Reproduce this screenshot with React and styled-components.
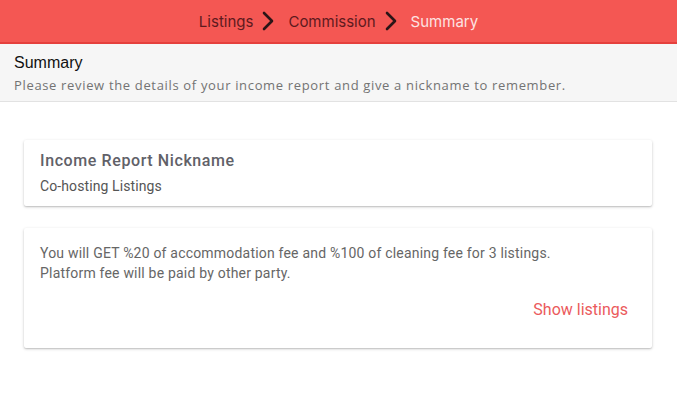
import React from 'react';
import styled, { createGlobalStyle } from 'styled-components';

const GlobalStyle = createGlobalStyle`
  html, body {
    margin: 0;
    padding: 0;
    background: #ffffff;
    font-family: Roboto, "Liberation Sans", sans-serif;
  }
`;

const Page = styled.div`
  width: 677px;
  height: 403px;
  overflow: hidden;
  background: #ffffff;
`;

const Steps = styled.nav`
  height: 42px;
  background: #f45753;
  border-bottom: 2px solid #e5403d;
  display: flex;
  align-items: center;
  justify-content: center;
  gap: 8px;
`;

const Step = styled.span`
  font-family: Inter, Roboto, sans-serif;
  font-size: 15px;
  color: ${(p) => (p.active ? '#fde3e2' : '#5e1a1e')};
`;

const Chevron = styled.svg`
  width: 14px;
  height: 22px;
  margin: 0 5px 0 0;
`;

const SubHeader = styled.header`
  background: #f6f6f6;
  border-bottom: 1px solid #e2e2e2;
  padding: 8px 14px 9px;
  height: 40px;
`;

const SubTitle = styled.h1`
  margin: 0;
  font-family: "Liberation Sans", Arial, sans-serif;
  font-weight: 400;
  font-size: 16px;
  line-height: 21px;
  color: #111;
`;

const SubText = styled.p`
  margin: 3px 0 0;
  font-family: "Open Sans", sans-serif;
  font-size: 13px;
  line-height: 18px;
  letter-spacing: 0.66px;
  color: #737373;
`;

const Content = styled.main`
  padding: 38px 24px 0 24px;
  display: flex;
  flex-direction: column;
  gap: 22px;
`;

const Card = styled.section`
  width: 628px;
  box-sizing: border-box;
  background: #fff;
  border-radius: 2px;
  box-shadow: 0 1px 3px rgba(0, 0, 0, 0.22), 0 1px 1px rgba(0, 0, 0, 0.08);
  padding: ${(p) => p.pad || '10px 16px 11px'};
`;

const CardTitle = styled.h2`
  margin: 0;
  font-size: 16px;
  font-weight: 500;
  line-height: 22px;
  letter-spacing: 0.6px;
  color: #616168;
`;

const CardValue = styled.div`
  margin-top: 5px;
  font-size: 14px;
  line-height: 18px;
  letter-spacing: 0.1px;
  color: #555;
`;

const Info = styled.p`
  margin: 0;
  font-size: 14px;
  line-height: 20px;
  letter-spacing: 0.2px;
  color: #666;
`;

const Actions = styled.div`
  display: flex;
  justify-content: flex-end;
  margin-top: 17px;
`;

const LinkButton = styled.button`
  border: none;
  background: none;
  padding: 0;
  font-family: Roboto, sans-serif;
  font-size: 16px;
  line-height: 19px;
  color: #eb5a5c;
  cursor: pointer;
`;

const Arrow = () => (
  <Chevron viewBox="0 0 14 22">
    <path d="M3 3 L11 11 L3 19" fill="none" stroke="#2b1517" strokeWidth="2.6" strokeLinecap="round" strokeLinejoin="round" />
  </Chevron>
);

export default function App() {
  return (
    <Page>
      <GlobalStyle />
      <Steps>
        <Step>Listings</Step>
        <Arrow />
        <Step>Commission</Step>
        <Arrow />
        <Step active>Summary</Step>
      </Steps>
      <SubHeader>
        <SubTitle>Summary</SubTitle>
        <SubText>Please review the details of your income report and give a nickname to remember.</SubText>
      </SubHeader>
      <Content>
        <Card>
          <CardTitle>Income Report Nickname</CardTitle>
          <CardValue>Co-hosting Listings</CardValue>
        </Card>
        <Card pad="15px 24px 29px 16px">
          <Info>
            You will GET %20 of accommodation fee and %100 of cleaning fee for 3 listings.
            <br />
            Platform fee will be paid by other party.
          </Info>
          <Actions>
            <LinkButton>Show listings</LinkButton>
          </Actions>
        </Card>
      </Content>
    </Page>
  );
}
